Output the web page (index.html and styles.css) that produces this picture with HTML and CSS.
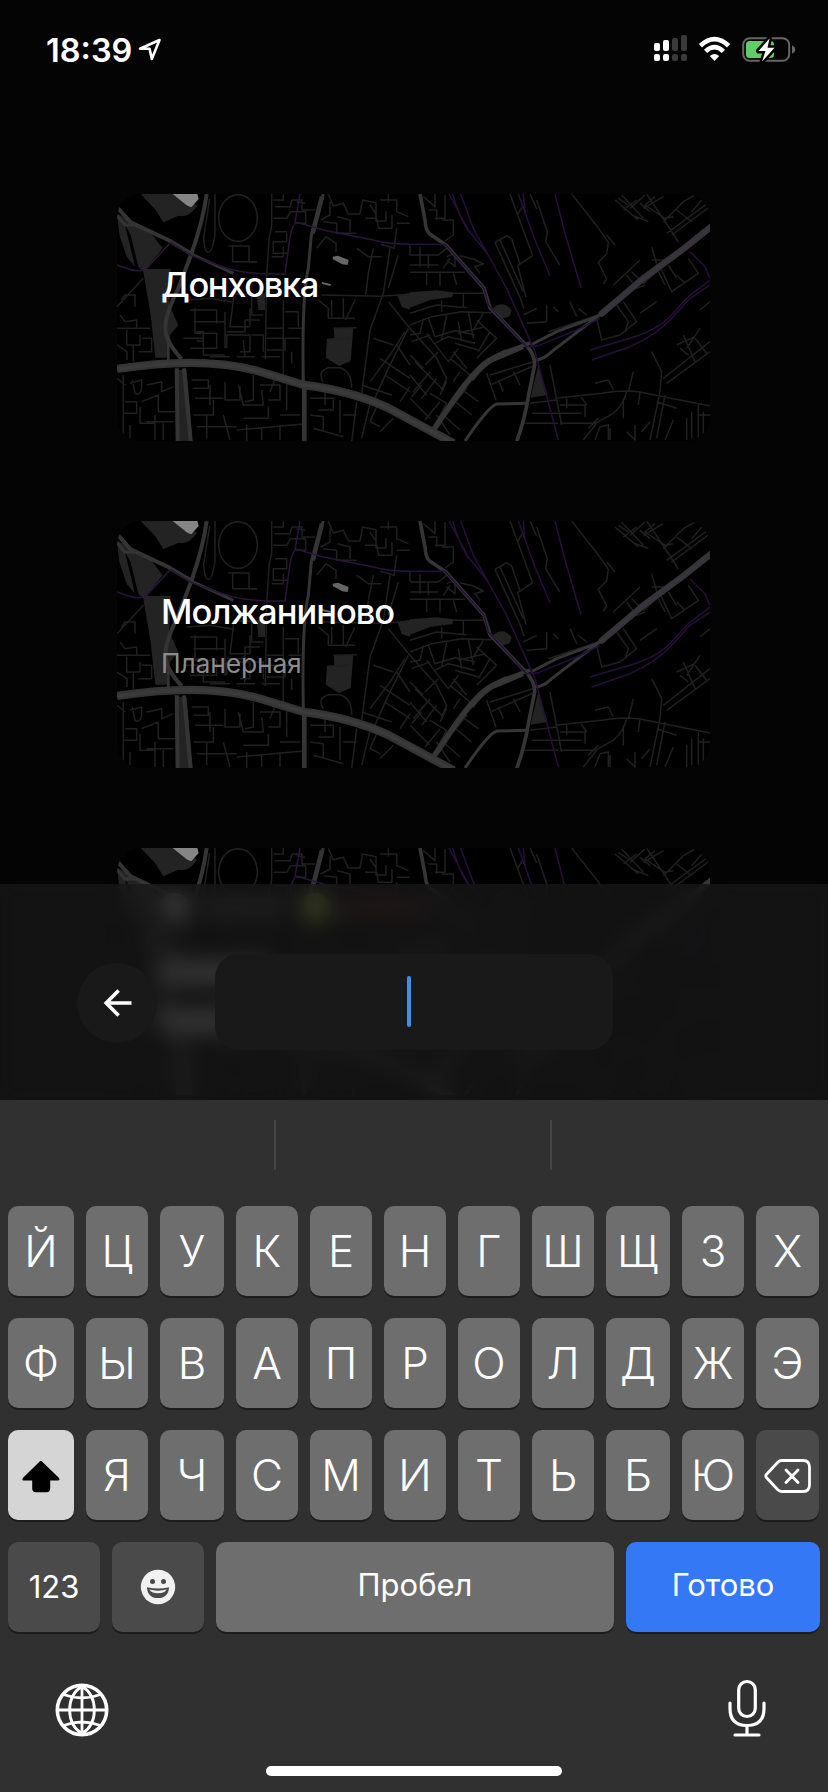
FILE: index.html
```html
<!DOCTYPE html>
<html lang="ru">
<head>
<meta charset="utf-8">
<title>Выбор станции</title>
<link rel="stylesheet" href="styles.css">
</head>
<body>
<svg class="defs" width="0" height="0">
  <symbol id="city-map" viewBox="0 0 1779 741" preserveAspectRatio="none">
    <rect width="1779" height="741" fill="#000"/>
    <!-- west half -->
    <g transform="translate(-21 -27)" fill="none" stroke-linejoin="round">
      <g fill="#232323">
        <path d="M92 27H200L262 62Q235 100 205 92L160 112L135 72Z"/>
        <path d="M21 85L75 118L120 140L158 190L108 252L182 252L178 360L205 420L180 450L170 518L136 518L122 390L100 260L85 245L62 150L45 120L75 245L50 215L28 150Z"/>
        <path d="M440 325h25v50h-20zM672 430l58-2-8 100-35 15-40-25 4-56 22-2zM862 330l38-6v50l-25-8z"/>
        <path d="M195 555h35l18 215h-50z"/>
      </g>
      <path fill="#858585" d="M188 27H262L266 42L244 67L232 62Z"/>
      <path fill="#666" d="M668 215l16-3 32 13-3 15-16-2-28-15zM636 291l28 7-4 5-25-7z"/>
      <g stroke="#202020" stroke-width="4.5">
        <ellipse cx="384" cy="99" rx="58" ry="70"/>
        <path d="M315 27v120q-8 55-20 55t-14-45l18-115M355 183h62v48h25M368 185v45h70M485 27v95l-8 40-7 110-4 250"/>
        <path d="M490 45h30v-18M495 65h45l6-20h30v30h40M490 100h40l12-20h45v35h-30M495 140h35v30h-40v35h45M485 215h35v-30M560 50l25 5M660 50v40l-28 15M655 28l15 35 30-8 15 32h35l8-42 40 8v55h30v-30M640 110l40 5v30h60M720 140v-35l-38-10M765 100h35l6 30h40v-40M810 45h50v35l35 15M835 28v25M780 60l20 30M860 130l-8 60-40-12M900 115h-40M620 190l28-35 30 20v25M635 330l175 4 90-6M790 190l-15 75-8 65M840 190l-20 135-40 110-25 190M865 210l-30 100M740 190l35 25h40M625 345l30 25v30h50M665 345v50M700 340v60h35M735 345l-28 60"/>
        <path d="M100 280L21 365M230 345l70-5 70 12v-25h55v60M240 375h80v40M250 410h95v-30M255 370v75h65v45h-80M345 380v110M370 345l-10 80h60v-55M350 440h55v-35h45M220 460h60v50h65M350 490v-40h70v50h-30M400 465l5 50M425 450h35v50M420 390h40M470 430h50v30h-50M470 495h55v-35h45M520 345v250M525 380h40v45M535 430h40M545 500v35M260 440h20v28h-20M300 515h60M380 515h55M455 515h55"/>
        <path d="M30 390l15 20 35-5v25h40M21 430h100M50 435v45h40v-30M21 480l30 20v25M70 480v50M95 460h30v40h-40M35 345l10-15h30v35"/>
        <path d="M40 570v195M21 580l25 20M60 595l35-10v25q-5 25-20 15l-8-40M110 600l45-10v30l35-15M45 650h35v35h-40M90 665v50h45M95 650l50-20v50h50M110 710h80M135 690v75M160 715v50M60 720v45M245 585h50v25h-45M255 640h85M300 600v60M345 590v55h45v-40M340 690l20 75M250 690h60v-45M260 725h120M290 690v70M385 600l15 60h60l-5-45M400 700h75v-35M430 570v75l-25 5M450 600h60v45h-35M500 570l-20 50M530 590v85M510 690h60M380 735l200-18M410 720v50M455 730v35M510 720v45M600 640h70v35h-45M600 690l40 5v45M610 730l90 25M645 610v50M690 645v100M740 650l-15 120M780 655l-25 105M800 665l-20 45 30 15M700 690h40"/>
        <path d="M640 590q-20-30 15-42h35q35 10 35 60M670 430l70-2M655 463l65-3M790 460l60 20M810 520l90 60M780 590l60-80 45-70M895 430l-60 120-45 100M835 350l65 80M860 480l40 60M755 600l90 30M825 570l75 50M870 650l30-45M850 700l-40 40"/>
      </g>
      <g stroke="#343434">
        <path stroke-width="12" d="M290 27Q280 105 244 207L205 310Q165 390 166 430T215 522M21 66L62 112L175 165L250 210"/>
        <path stroke-width="9" d="M21 92L45 120H75M250 210L370 265M640 27L604 150L595 250Q575 330 580 598L583 770"/>
        <path stroke-width="8" d="M175 470V530"/>
        <path stroke-width="14" d="M636 35L608 145M583 600V770"/>
        <path stroke-width="12" d="M200 550L203 770M222 550L242 770"/>
      </g>
      <g stroke="#2a163a" stroke-width="4.5">
        <path d="M21 240L55 252Q92 264 110 250L182 172L245 212L330 243Q400 270 525 267L538 170Q545 118 560 112L640 135L790 165Q840 178 900 178M570 27L555 112"/>
      </g>
    </g>
    <!-- east half -->
    <g transform="translate(879 -27)" fill="none" stroke-linejoin="round">
      <path fill="#232323" d="M0 322L80 316L130 322L127 336L60 345L0 368ZM250 368q30-24 55 8l-6 18-26 8zM385 540l28 90-52 8z"/>
      <g stroke="#202020" stroke-width="4.5">
        <path d="M40 35l35 30v-38M55 75h25v30M75 100h30v-70M95 105h35v45l-25 18M0 210h85l25-20M0 180v30M30 185v60M55 210v40M0 240h85M0 262h165M50 265v35M90 262v40M130 265l10 35M110 225l25 20v-40l-25 10M100 250l20-30M210 265l-15-20 25-8-30-15-40-10"/>
        <path d="M130 325h100M160 325v40M0 385l80-25 90 8M95 345v35M0 420l65-25 90-15 90 3M40 400l-10 45-30 5M55 400l20 55 60-18 60 12M110 390l-15 75M145 410l10 60M175 380l15 80M220 385l-30 50M5 470l55-20M0 430l80 90 30 60-15 35M85 500l-40 40M50 445l65 85 30-40M120 520l60 50M135 475l70 20M130 500l40 50M75 475l40-20 80 20M0 510l40 40M0 570l50 60M15 530l85 85M60 560l-50 60M35 600l-30 35M80 580l-45 60M110 590l-20 40M60 625l50 30-30 55M90 650l-45 55M0 640l60 60M225 425l-80 20M200 405l60 55-60 60M240 440l-35 60M150 560l-20 30"/>
        <path d="M240 570l130-40M245 598l125-55M230 565l28 80M265 585l15 35M310 560l20 40M150 610l55 40M125 640l60 50M100 690l50 45M170 610l-45 55M80 690l40 60"/>
        <path d="M300 27l68 185-45 30 25 95M322 90l15-25M380 45l32 95-5 30 42 70M360 27l20 45M255 172l35-20 15 10 25 75M255 172l75 165 12 35M270 165l70 155M410 360v50l-60 5M340 390l40-20M415 440l150-50M430 365l15 15M480 350l20 45M505 370l25 20"/>
        <path d="M485 27l75 95 35 50-5 35-25 25 25 50-10 15M590 150l25 30M615 45l70 60M635 30l65 70M655 60l-30-20M680 45l-40 30M705 30l-45 40M665 90l50 20M690 55l30 25M710 27l50 75 30 45 15 25M700 70l60-35M735 35l-30 25 60 40 25-5M760 110l60-60 35-20M770 145l130-95M785 150l115-85M800 75l45 35M880 40l-35 40"/>
        <path d="M665 260l35 35 45-40-20-70M725 225h40M610 300l80-75M620 360l35 50-10 30M640 350l40 60-50 40-55 15-15-65M650 270l30 40 25-10M690 385l50-35M750 245l35 75 80-55-30-45M765 300l-20-40M800 270l25 25M775 240l25 40M870 375l30-25"/>
        <path d="M725 500l30 60-5 60-30 145M765 630l-25 130M760 580l140-110M770 595l130-95M820 450l35 80M800 480l55-25M855 460l35 45M835 510l-25-20M870 430l-40 60M555 595l40-10 15 30M670 560l-15 60M435 640l140-15q60-10 110-5l215 43M360 655l80-10M450 660h75v35M470 640v30M510 630l20 30M365 685h150M450 715h105l55-30q30-25 40-65M340 715h105M520 765l40-50M555 765l15-40 25-5v45M565 700l-30 30M600 730v35M640 640v60M690 620l-5 40M740 650l60 20M865 660v100M830 700v65M845 680v80M790 705l-25 60M880 680v85M900 690h-35M675 720v45l-25-25M720 710l-25 30M420 540l35 180"/>
      </g>
      <g stroke="#353535" stroke-width="11">
        <path d="M30 27L45 105Q47 138 60 148L108 180L222 310L240 368L350 482Q375 510 374 540L355 635Q345 700 320 770"/>
        <path stroke-width="9" d="M353 655L260 657Q235 665 165 768M362 480L440 440L560 395L600 368M374 525Q400 525 425 500L600 366"/>
        <path stroke-width="19" stroke-linecap="round" d="M910 120L820 192L700 280L575 386"/>
        <path stroke-width="17" d="M60 750L135 640Q205 540 250 520L290 500"/>
        <path stroke-width="11" d="M275 505L360 474M340 487L245 527Q215 545 185 585"/>
      </g>
      <path stroke="#39333f" stroke-width="10" d="M910 120L820 192L700 280L575 386"/>
      <g stroke="#270f3a" stroke-width="4.5">
        <path d="M0 178H105L165 245L222 310L235 360L350 485L385 482L500 435L570 400M117 27L175 135L235 210M128 27Q145 90 175 138M152 27L190 130L240 220L290 310L375 500L445 765M325 27L375 165L420 272M340 27L345 80M435 27L465 145L513 308M540 495L660 460Q740 435 780 395L835 335L900 285M545 525L660 485Q740 450 785 400L840 340L900 300M840 200L885 245L900 280"/>
      </g>
    </g>
    <!-- highway crossing the whole district -->
    <path d="M0 525Q260 485 430 533L560 573Q700 590 810 640L1010 748" fill="none" stroke="#343434" stroke-width="25"/>
    <path d="M0 525Q260 485 430 533L560 573Q700 590 810 640L1010 748" fill="none" stroke="#3a3a3a" stroke-width="12"/>
  </symbol>
</svg>

<div class="screen">
  <header class="status">
    <div class="clock">
      <span class="time">18:39</span>
      <svg class="locate" width="24" height="24" viewBox="0 0 24 24"><path d="M21.5 2L2 10.8h9.6L13.8 21Z" fill="none" stroke="#fff" stroke-width="2.6" stroke-linejoin="round"/></svg>
    </div>
    <svg class="indicators" width="142" height="30" viewBox="0 0 142 30">
      <g fill="#fff">
        <rect y="9" width="6" height="8" rx="2"/><rect x="9" y="6" width="6" height="11" rx="2"/>
        <rect y="20" width="6" height="7" rx="2"/><rect x="9" y="20" width="6" height="7" rx="2"/>
      </g>
      <g fill="#3a3a3a">
        <rect x="18" y="4" width="6" height="13" rx="2"/><rect x="27" y="1" width="6" height="16" rx="2"/>
        <rect x="18" y="20" width="6" height="7" rx="2"/><rect x="27" y="20" width="6" height="7" rx="2"/>
      </g>
      <g fill="none" stroke="#fff" stroke-width="4.6">
        <path d="M46.4 11.8Q60.5-1.4 74.6 11.8"/><path d="M51.6 17.3Q60.5 8.9 69.4 17.3"/>
      </g>
      <path d="M55.8 22q4.7-3.8 9.4 0L60.5 27Z" fill="#fff"/>
      <rect x="89.2" y="4.2" width="46" height="22.6" rx="6.5" fill="none" stroke="#666" stroke-width="2"/>
      <path d="M138 11.5q3.2 1 3.2 4t-3.2 4z" fill="#666"/>
      <rect x="92" y="7" width="28" height="17" rx="3.5" fill="#62cd67"/>
      <path d="M115.500 4.500L104.500 17h7l-3.400 10.500L120.500 13.800h-7Z" fill="#fff" stroke="#040404" stroke-width="5" paint-order="stroke" stroke-linejoin="round"/>
    </svg>
  </header>

  <main class="stations">
    <article class="station">
      <svg class="map"><use href="#city-map"/></svg>
      <h2 class="name tight">Донховка</h2>
    </article>
    <article class="station">
      <svg class="map"><use href="#city-map"/></svg>
      <h2 class="name">Молжаниново</h2>
      <p class="line">Планерная</p>
    </article>
    <article class="station">
      <svg class="map"><use href="#city-map"/></svg>
      <div class="tags"><i class="dot"></i><i class="bar"></i><i class="dot lime"></i><i class="bar red"></i></div>
      <div class="heading"><i></i><i></i></div>
    </article>
  </main>

  <section class="dock">
    <div class="search">
      <button class="back" aria-label="Назад"><svg width="30" height="30" viewBox="0 0 30 30"><path d="M15.6 2.4L3.2 15l12.4 12.6M3.5 15H28.5" fill="none" stroke="#fff" stroke-width="3.6"/></svg></button>
      <div class="field"><i class="caret"></i></div>
    </div>
    <div class="keyboard">
      <div class="suggest"><i></i><i></i><i></i></div>
      <div class="keys">
        <b>Й</b><b>Ц</b><b>У</b><b>К</b><b>Е</b><b>Н</b><b>Г</b><b>Ш</b><b>Щ</b><b>З</b><b>Х</b>
        <b>Ф</b><b>Ы</b><b>В</b><b>А</b><b>П</b><b>Р</b><b>О</b><b>Л</b><b>Д</b><b>Ж</b><b>Э</b>
        <b class="shift"><svg width="38" height="33" viewBox="0 0 38 33"><path d="M18.8.8Q19.5.8 20 1.4L36.8 17.8Q38.6 20.6 35.5 20.6H28.2V28.5Q28.2 32.2 24.5 32.2H14Q10.2 32.2 10.2 28.5V20.6H2.5Q-.8 20.6 1 17.8L17.7 1.4Q18.2.8 18.8.8Z"/></svg></b>
        <b>Я</b><b>Ч</b><b>С</b><b>М</b><b>И</b><b>Т</b><b>Ь</b><b>Б</b><b>Ю</b>
        <b class="dim erase"><svg width="48" height="36" viewBox="0 0 48 36"><path d="M17.5 2.5H39Q45.5 2.5 45.5 9V27Q45.5 33.5 39 33.5H17.5Q15.5 33.5 13.8 31.8L2.6 19.8Q1 18 2.6 16.2L13.8 4.2Q15.5 2.5 17.5 2.5ZM22 12L34 24.5M34 12L22 24.5" fill="none" stroke="#fff" stroke-width="2.8" stroke-linecap="round" stroke-linejoin="round"/></svg></b>
      </div>
      <div class="wide">
        <b class="dim digits">123</b>
        <b class="dim"><svg width="36" height="36" viewBox="0 0 36 36"><circle cx="18" cy="18" r="17.2" fill="#f1f1f1"/><g fill="#4a4a4a"><circle cx="12.5" cy="12.5" r="2.5"/><circle cx="23.5" cy="12.5" r="2.5"/><path d="M7 18.2Q18 21 29 18.2Q28.5 29 18 29T7 18.2Z"/></g><path d="M9.3 20.6Q18 22.8 26.7 20.6Q25 24.3 18 24.3T9.3 20.6Z" fill="#f1f1f1"/></svg></b>
        <b class="word">Пробел</b>
        <b class="word done">Готово</b>
      </div>
      <div class="tools">
        <svg width="54" height="54" viewBox="0 0 54 54" fill="none" stroke="#fff"><circle cx="27" cy="27" r="24.7" stroke-width="3.6"/><path stroke-width="2.8" d="M27 2V52M2 27H52M27 3C10.5 14 10.5 40 27 51M27 3C43.5 14 43.5 40 27 51M8.5 11.500Q27 18.500 45.500 11.500M8.500 42.500Q27 35.500 45.500 42.500"/></svg>
        <svg width="38" height="58" viewBox="0 0 38 58" fill="none" stroke="#fff" stroke-width="3.2" stroke-linecap="round"><rect x="10.7" y="2.500" width="16.600" height="35" rx="8.300"/><path d="M2 24v5.500Q2 46.500 19 46.500T36 29.500V24M19 46.500V56M7 56H31"/></svg>
      </div>
      <div class="home"></div>
    </div>
  </section>
</div>
</body>
</html>
```
FILE: styles.css
```css
* { box-sizing: border-box; }
body { margin: 0; background: #040404; font-family: Inter, "Noto Sans", sans-serif; color: #fff; }
.defs { position: absolute; }
.screen { position: relative; width: 828px; height: 1792px; overflow: hidden; background: #040404; }

.status { display: flex; justify-content: space-between; height: 194px; padding: 34px 33px 0 46px; }
.clock { display: flex; gap: 6px; }
.time { font-size: 32.5px; line-height: 33px; font-weight: 580; letter-spacing: 0; }
.locate { margin-top: 4px; }
.indicators { margin-right: -1px; }

.stations { display: flex; flex-direction: column; gap: 80px; padding: 0 118px 0 117px; }
.station { position: relative; height: 247px; border-radius: 24px; overflow: hidden; padding: 69px 45px 0 44px; }
.map { position: absolute; inset: 0; width: 100%; height: 100%; }
.name { position: relative; margin: 0; font-size: 34.5px; line-height: 44px; font-weight: 500; letter-spacing: -1px; white-space: nowrap; }
.tight { letter-spacing: -1.4px; }
.line { position: relative; margin: 13px 0 0; font-size: 26.5px; line-height: 32px; letter-spacing: -.2px; color: #8c8c8c; }
.tags { position: relative; display: flex; align-items: center; gap: 16px; margin-top: -24px; }
.dot { width: 28px; height: 28px; border-radius: 50%; background: #8c8c8c; }
.bar { width: 80px; height: 18px; background: #2c2c2c; }
.lime { background: #8c9a35; }
.red { background: #321010; }
.heading { position: relative; display: grid; gap: 23px; margin-top: 38px; width: 105px; }
.heading i { height: 26px; background: #777; }

.dock { position: absolute; left: 0; right: 0; top: 884px; bottom: 0; display: flex; flex-direction: column; }
.search { display: flex; align-items: flex-start; gap: 58px; height: 216px; padding: 19px 0 0 77px; background: rgba(25, 25, 25, .73); backdrop-filter: blur(10px); }
.back { width: 80px; height: 80px; margin-top: 60px; padding: 0 0 0 2px; border: 0; border-radius: 50%; background: #191919; display: grid; place-items: center; }
.field { width: 398px; height: 96px; margin-top: 51px; border-radius: 24px; background: #191919; padding: 22px 0 0 192px; }
.caret { display: block; width: 4px; height: 51px; border-radius: 2px; background: #438ee8; }

.keyboard { flex: 1; background: #303030; display: flex; flex-direction: column; }
.suggest { height: 106px; padding: 20px 0 36px; display: flex; }
.suggest i { width: 276px; border-right: 2px solid #454545; }
.suggest i:last-child { border: 0; }
.keys { display: grid; grid-template-columns: 66px 62px 64px repeat(5, 62px) 64px 62px 63px; column-gap: 12px; row-gap: 22px; grid-auto-rows: 90px; padding-left: 8px; }
b { display: grid; place-items: center; border-radius: 10px; background: #6e6e6e; box-shadow: 0 2px 0 #1c1c1c; font-size: 44px; line-height: 90px; font-weight: 350; }
.shift { background: #d5d5d5; padding-top: 2px; }
.dim { background: #4a4a4a; }
.erase { padding-top: 2px; }
.wide { display: grid; grid-template-columns: 92px 92px 398px 194px; height: 90px; margin: 22px 8px 0; justify-content: space-between; }
.digits, .word { font-size: 31px; font-weight: 380; }
.word { padding-bottom: 4px; line-height: 86px; }
.done { background: #3478f6; }
.tools { display: flex; justify-content: space-between; padding: 47px 62px 0 55px; height: 134px; }
.tools svg:first-child { margin-top: 4px; }
.home { width: 296px; height: 10px; border-radius: 5px; background: #fff; margin: 0 auto; }
```
